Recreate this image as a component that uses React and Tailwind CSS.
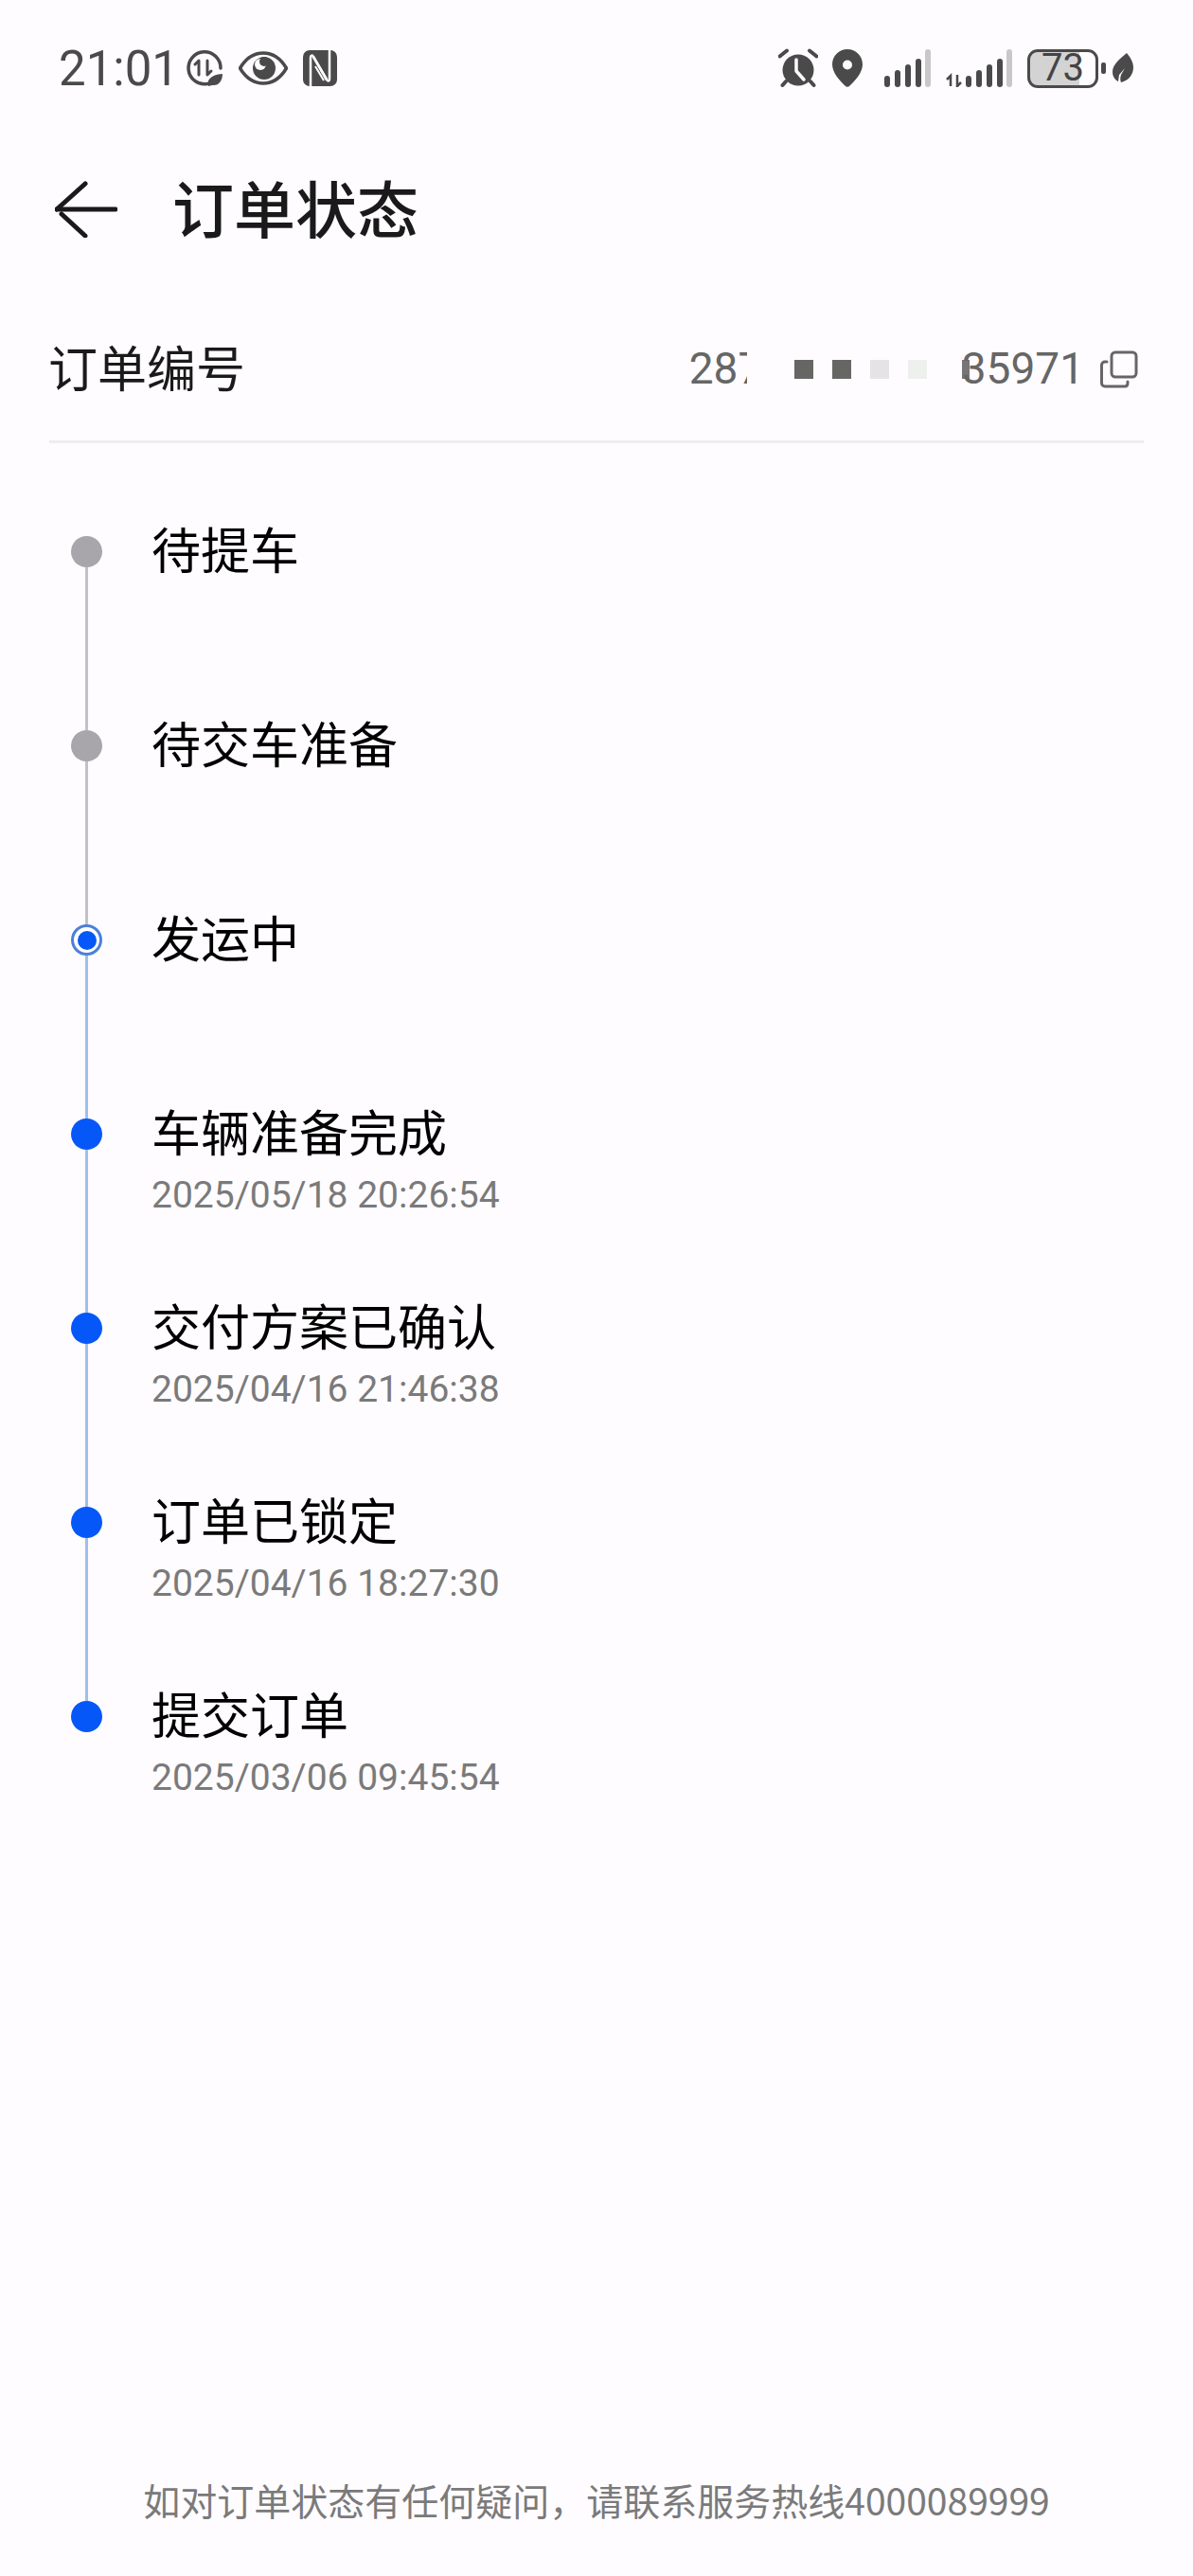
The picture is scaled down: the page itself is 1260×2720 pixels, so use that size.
import React from 'react';

const steps = [
  { name: '待提车', state: 'todo' },
  { name: '待交车准备', state: 'todo' },
  { name: '发运中', state: 'current' },
  { name: '车辆准备完成', time: '2025/05/18 20:26:54', state: 'done' },
  { name: '交付方案已确认', time: '2025/04/16 21:46:38', state: 'done' },
  { name: '订单已锁定', time: '2025/04/16 18:27:30', state: 'done' },
  { name: '提交订单', time: '2025/03/06 09:45:54', state: 'done' },
];

function DataLeafIcon() {
  return (
    <svg width="40" height="40" viewBox="0 0 40 40" fill="none" aria-hidden="true">
      <path d="M23 36.500A17 17 0 1 1 37 20" stroke="#4a4a4a" strokeWidth="3.500" strokeLinecap="round" />
      <path d="M14 27V12l-4 4M23 12v15l4-4" stroke="#4a4a4a" strokeWidth="3" strokeLinecap="round" strokeLinejoin="round" />
      <path d="M24 39c-2-6 2-12 15-13 0 7-4 13-11 12l-4 1z" fill="#4a4a4a" />
    </svg>
  );
}

function EyeIcon() {
  return (
    <svg width="52" height="36" viewBox="0 0 52 36" aria-hidden="true">
      <path d="M1.500 18C8 7 16 2 26 2s18 5 24.500 16C44 29 36 34 26 34S8 29 1.500 18z" fill="none" stroke="#4a4a4a" strokeWidth="3.500" strokeLinejoin="round" />
      <circle cx="27" cy="18" r="12" fill="#4a4a4a" />
      <circle cx="23" cy="14" r="6" fill="#fefcff" />
      <circle cx="27" cy="11" r="5" fill="#4a4a4a" />
    </svg>
  );
}

function NfcIcon() {
  return (
    <svg width="36" height="38" viewBox="0 0 36 38" aria-hidden="true">
      <rect x="0" y="0" width="36" height="38" rx="7" fill="#4a4a4a" />
      <path d="M8 38V8c0-3 2-3 3-1l14 24" fill="none" stroke="#fefcff" strokeWidth="2.500" />
      <path d="M28 0v30c0 3-2 3-3 1L11 7" fill="none" stroke="#fefcff" strokeWidth="2.500" />
      <path d="M13 17l9 15" stroke="#fefcff" strokeWidth="2" />
    </svg>
  );
}

function AlarmIcon() {
  return (
    <svg width="42" height="42" viewBox="0 0 42 42" aria-hidden="true">
      <circle cx="21" cy="23" r="16.500" fill="#4a4a4a" />
      <path d="M1.500 8.500L9 2.500M33 2.500l7.500 6M8 35l-3.500 4M34 35l3.500 4" stroke="#4a4a4a" strokeWidth="4" strokeLinecap="round" />
      <path d="M19 12v12l8 9" fill="none" stroke="#fefcff" strokeWidth="3.500" strokeLinecap="round" strokeLinejoin="round" />
    </svg>
  );
}

function PinIcon() {
  return (
    <svg width="32" height="40" viewBox="0 0 32 40" aria-hidden="true">
      <path fillRule="evenodd" d="M16 0c9 0 16 7 16 16 0 9-8 17-14 23-1 1-3 1-4 0C8 33 0 25 0 16 0 7 7 0 16 0zm0 11.500a5 5 0 1 0 0 10 5 5 0 0 0 0-10z" fill="#4a4a4a" />
    </svg>
  );
}

function SignalBars({ withArrows }) {
  const bars = [
    { x: 0, h: 12 },
    { x: 11, h: 18 },
    { x: 22, h: 24 },
    { x: 33, h: 30 },
  ];
  return (
    <svg width={withArrows ? 70 : 49} height="40" viewBox={`${withArrows ? -21 : 0} 0 ${withArrows ? 70 : 49} 40`} aria-hidden="true">
      {withArrows && (
        <path d="M-16 39V28l-4 4M-9 27v12l4-4" fill="none" stroke="#4a4a4a" strokeWidth="2.500" />
      )}
      {bars.map((b) => (
        <rect key={b.x} x={b.x} y={40 - b.h} width="6" height={b.h} rx="3" fill="#4a4a4a" />
      ))}
      <rect x="43" y="0" width="6" height="40" rx="3" fill="#c8c8c8" />
    </svg>
  );
}

function LeafIcon() {
  return (
    <svg width="22" height="32" viewBox="0 0 22 32" aria-hidden="true">
      <path d="M15 0c5 6 7 11 7 15 0 8-5 14-13 16-1-2-1-5 0-8l4-7-6 7-1 7C2 28 0 24 0 20 0 12 8 6 15 0z" fill="#4a4a4a" />
    </svg>
  );
}

function Battery() {
  return (
    <div className="flex items-center">
      <div className="flex h-[41px] w-[75px] items-center justify-center rounded-[11px] border-[3px] border-[#4a4a4a] bg-[linear-gradient(90deg,#d3d3d3_76%,transparent_76%)] font-['Roboto',sans-serif] text-[40px] text-[#444444]">
        73
      </div>
      <div className="ml-[3px] h-[12px] w-[5px] rounded-[2px] bg-[#4a4a4a]" />
    </div>
  );
}

function CopyIcon() {
  return (
    <svg width="40" height="40" viewBox="0 0 40 40" fill="none" stroke="#666666" strokeWidth="3" strokeLinejoin="round" strokeLinecap="round" aria-hidden="true">
      <rect x="12" y="2" width="26" height="26" rx="4" />
      <path d="M7 12H5c-2 0-3.500 1.500-3.500 3.500v19c0 2 1.500 3.500 3.500 3.500h21c2 0 3-1.500 3-3.500V33" />
    </svg>
  );
}

function StepDot({ state }) {
  if (state === 'current') {
    return (
      <div className="flex h-[33px] w-[33px] items-center justify-center rounded-full border-[3px] border-[#4c80d8] bg-white">
        <div className="h-[20px] w-[20px] rounded-full bg-[#0558f7]" />
      </div>
    );
  }
  return <div className={`h-[33px] w-[33px] rounded-full ${state === 'todo' ? 'bg-[#a8a6aa]' : 'bg-[#0558f7]'}`} />;
}

export default function App() {
  return (
    <div className="flex h-[2720px] w-[1260px] flex-col overflow-hidden bg-[#fefcff] font-['Noto_Sans_CJK_SC',sans-serif]">
      {/* status bar */}
      <div className="flex h-[177px] items-start justify-between pl-[62px] pr-[63px] pt-[50px]">
        <div className="flex h-[44px] items-center">
          <span className="font-['Roboto',sans-serif] text-[51px] leading-none text-[#4a4a4a]">21:01</span>
          <div className="ml-[7px] flex items-center gap-[16px]">
            <DataLeafIcon />
            <EyeIcon />
            <NfcIcon />
          </div>
        </div>
        <div className="flex h-[44px] items-center">
          <AlarmIcon />
          <div className="ml-[15px]"><PinIcon /></div>
          <div className="ml-[23px]"><SignalBars /></div>
          <div className="ml-[16px]"><SignalBars withArrows /></div>
          <div className="ml-[16px]"><Battery /></div>
          <div className="ml-[7px]"><LeafIcon /></div>
        </div>
      </div>

      {/* header */}
      <div className="flex h-[88px] items-center pl-[58px]">
        <svg width="66" height="60" viewBox="0 0 66 60" fill="none" stroke="#1a1a1a" strokeWidth="5" strokeLinecap="round" strokeLinejoin="round" aria-hidden="true">
          <path d="M64 30H2" />
          <path d="M32 3L2 30M32 58L7 35" />
        </svg>
        <h1 className="-mt-[6px] ml-[58px] text-[65px] font-medium leading-none text-[#1a1a1a]">订单状态</h1>
      </div>

      {/* order number */}
      <div className="mx-[52px] mt-[50px] flex h-[153px] items-center justify-between border-b-[3px] border-[#efedf0] pb-[1px]">
        <span className="-ml-[1px] -mt-[6px] text-[52px] text-[#1a1a1a]">订单编号</span>
        <div className="flex items-center font-['Roboto',sans-serif] text-[46px] text-[#666666]">
          <span className="w-[61px] overflow-hidden whitespace-nowrap">287</span>
          <div className="ml-[50px] flex gap-[20px]">
            <div className="h-[20px] w-[20px] bg-[#666764]" />
            <div className="h-[20px] w-[20px] bg-[#666764]" />
            <div className="h-[20px] w-[20px] bg-[#e6e3e6]" />
            <div className="h-[20px] w-[20px] bg-[#eef0ee]" />
          </div>
          <div className="ml-[37px] h-[20px] w-[8px] bg-[#777578]" />
          <span className="-ml-[8px]">35971</span>
          <div className="ml-[17px] mr-[6px]"><CopyIcon /></div>
        </div>
      </div>

      {/* timeline */}
      <div className="pl-[75px] pt-[98px]">
        {steps.map((step, i) => (
          <div key={step.name} className="flex h-[205px]">
            <div className="flex w-[33px] flex-col items-center">
              <StepDot state={step.state} />
              {i < steps.length - 1 && (
                <div className={`w-[3px] flex-1 ${step.state === 'todo' ? 'bg-[#c3c1c6]' : 'bg-[#a0bdee]'}`} />
              )}
            </div>
            <div className="ml-[52px]">
              <div className="-mt-[4px] text-[52px] leading-[33px] text-black">{step.name}</div>
              {step.time && (
                <div className="mt-[36px] font-['Roboto',sans-serif] text-[39px] leading-[33px] text-[#7a7a7a]">{step.time}</div>
              )}
            </div>
          </div>
        ))}
      </div>

      {/* footer */}
      <div className="mt-auto pb-[57px] text-center text-[39px] leading-[48px] text-[#7a7a7a]">
        如对订单状态有任何疑问，请联系服务热线4000089999
      </div>
    </div>
  );
}
